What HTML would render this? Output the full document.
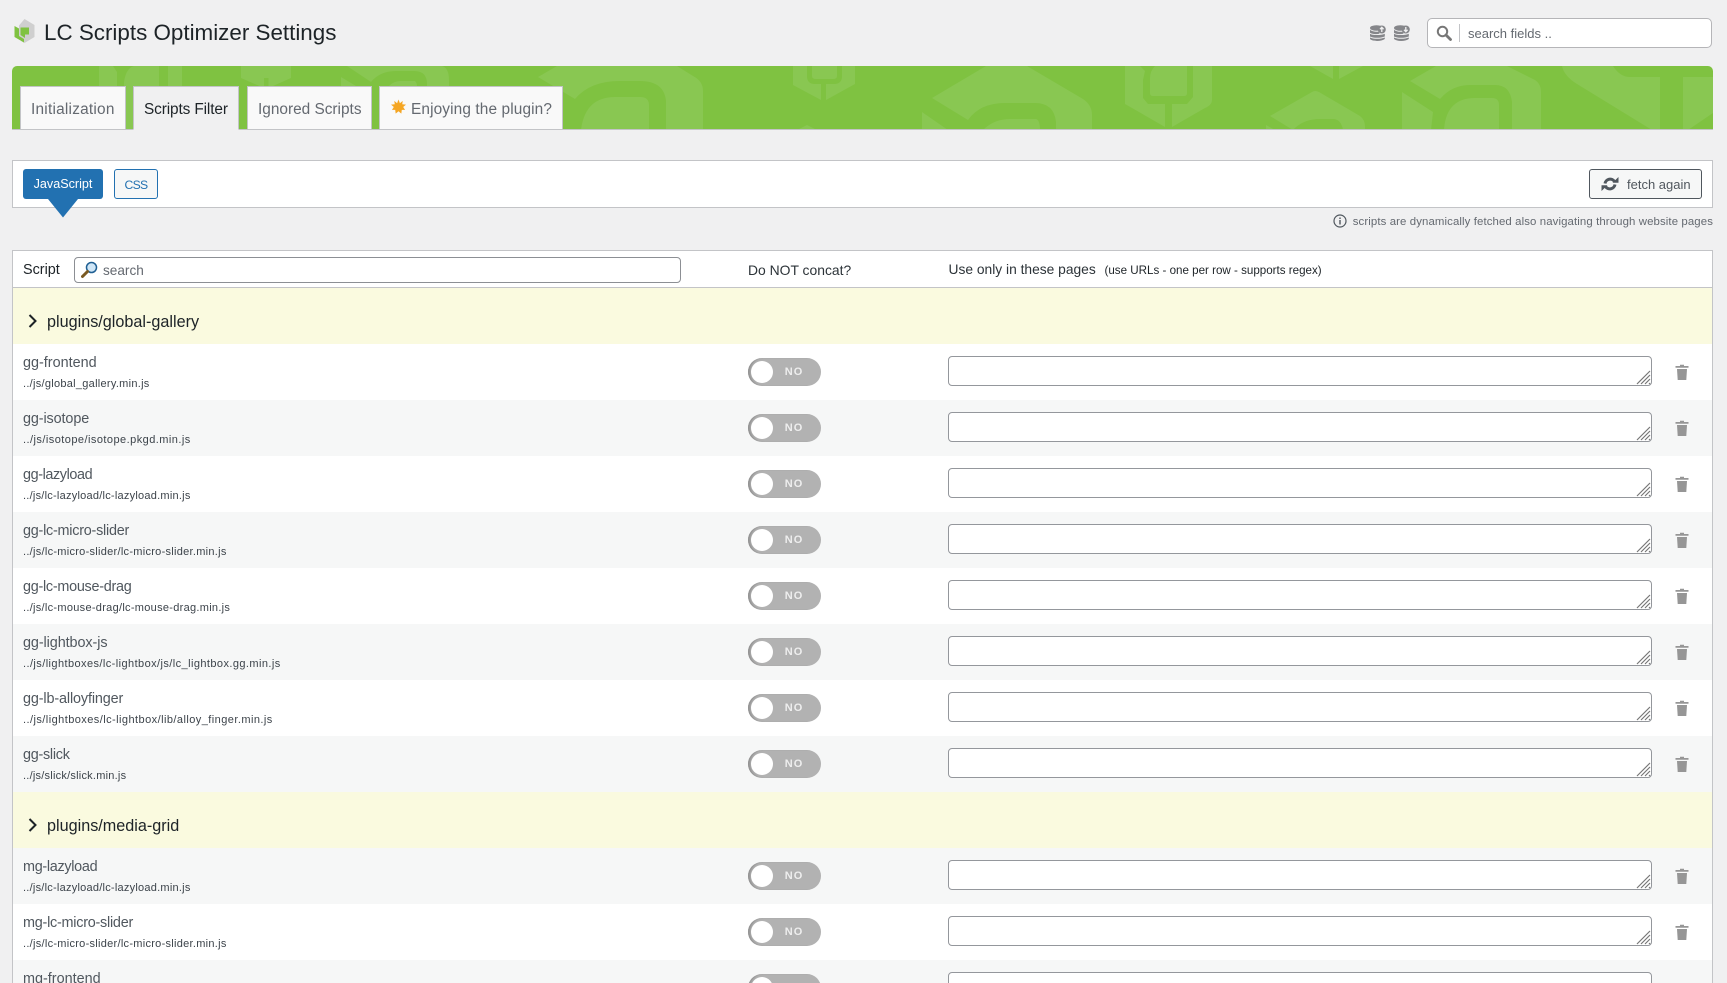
<!DOCTYPE html>
<html lang="en">
<head>
<meta charset="utf-8">
<title>LC Scripts Optimizer Settings</title>
<style>
html,body{margin:0;padding:0;width:1727px;height:983px;overflow:hidden;background:#f0f0f1;font-family:"Liberation Sans",Arial,sans-serif;color:#3c434a}
*{box-sizing:border-box}
#wrap{position:relative;width:1727px;height:983px;overflow:hidden}
.a{position:absolute}
#title{left:44px;top:18px;font-size:22.4px;line-height:30px;color:#1d2327;white-space:nowrap}
#search{left:1427px;top:18px;width:285px;height:30px;background:#fff;border:1px solid #b5b5b8;border-radius:5px}
#banner{left:12px;top:66px;width:1701px;height:64px;background:#7fc241;border-radius:5px 5px 0 0;border-bottom:1px solid #c3c4c7;overflow:hidden}
.tab{position:absolute;top:86px;height:44px;background:#f9f9f9;border:1px solid #c3c4c7;font-size:15.4px;line-height:45px;color:#646970;white-space:nowrap}
.tab.on{background:#f0f0f1;color:#1d2327;border-bottom-color:#f0f0f1}
#box{left:12px;top:160px;width:1701px;height:48px;background:#fff;border:1px solid #c3c4c7}
.btn{position:absolute;top:169px;height:30px;border-radius:3px;line-height:30px;white-space:nowrap;font-size:12.6px}
#tbl{left:12px;top:250px;width:1701px;height:740px;background:#fff;border:1px solid #c3c4c7;overflow:hidden}
.hd{position:absolute;top:270px;transform:translateY(-50%);white-space:nowrap;line-height:18px}
.row{position:absolute;left:13px;width:1699px;height:56px;background:#fff}
.row.g{background:#f6f7f7}
.grp{position:absolute;left:13px;width:1699px;height:56px;background:#fafadf}
.grp span{position:absolute;left:34px;top:25px;font-size:16.2px;line-height:19px;color:#1d2327;white-space:nowrap}
.grp svg{position:absolute;left:15px;top:26px}
.nm{position:absolute;left:10px;top:10px;font-size:14.4px;line-height:18px;color:#50575e;white-space:nowrap}
.pt{position:absolute;left:10px;top:33px;font-size:11px;line-height:14px;color:#3c434a;white-space:nowrap}
.tg{position:absolute;left:735px;top:14px;width:73px;height:28px;border-radius:14px;background:#b2b2b2;box-shadow:inset 3px 0 2px -1px #909090}
.tg i{position:absolute;left:3px;top:3px;width:22px;height:22px;border-radius:50%;background:#fff;display:block}
.tg b{position:absolute;left:34px;top:0;width:24px;text-align:center;font-weight:bold;font-size:11px;line-height:29px;color:#eee;letter-spacing:1px}
.ta{position:absolute;left:935px;top:12px;width:704px;height:30px;border:1px solid #94979c;border-radius:4px;background:#fff;resize:none;display:block;margin:0;padding:0;outline:0}
.gr{position:absolute;left:1623px;top:26px}
.tr{position:absolute;left:1662px;top:20px}
</style>
</head>
<body>
<div id="wrap">

<svg class="a" style="left:14px;top:19px" width="21" height="24" viewBox="0 0 21 24">
<path d="M10.5 0 20.5 6V18L10.5 24 7 22V19.500L5 18.500V6.500Z" fill="#cfcfcf"/>
<path d="M0.500 7 5 9.500V17L10 20V23.500L0.500 18Z" fill="#7fc241"/>
<path d="M6.500 8.500H15V15.500H11V19L6.500 16Z" fill="#7fc241"/>
</svg>
<div id="title" class="a">LC Scripts Optimizer Settings</div>

<svg class="a" style="left:1370px;top:25px" width="16" height="16" viewBox="0 0 16 16">
<g fill="#85868a"><ellipse cx="6.500" cy="3" rx="6.500" ry="2.800"/><path d="M0 4.800C2 7 8 7 9 6.500L9.500 8.800C6 9.500 2 9.200 0 7.800ZM0 8.700C2.500 10.500 11 10.500 14.800 8.700V11.500C11 13.200 3 13.200 0 11.500ZM0 12.500C3 14.200 11 14.200 14.800 12.500V14C11 16.600 3 16.600 0 14Z"/><circle cx="11.800" cy="4.500" r="4"/></g>
<path d="M11.800 7V2.500M10 4.200 11.800 2.300 13.600 4.200" fill="none" stroke="#f0f0f1" stroke-width="1.300"/>
</svg>
<svg class="a" style="left:1394px;top:25px" width="16" height="16" viewBox="0 0 16 16">
<g fill="#85868a"><ellipse cx="6.500" cy="3" rx="6.500" ry="2.800"/><path d="M0 4.800C2 7 8 7 9 6.500L9.500 8.800C6 9.500 2 9.200 0 7.800ZM0 8.700C2.500 10.500 11 10.500 14.800 8.700V11.500C11 13.200 3 13.200 0 11.500ZM0 12.500C3 14.200 11 14.200 14.800 12.500V14C11 16.600 3 16.600 0 14Z"/><circle cx="11.800" cy="4.500" r="4"/></g>
<path d="M11.800 2V6.500M10 4.800 11.800 6.700 13.600 4.800" fill="none" stroke="#f0f0f1" stroke-width="1.300"/>
</svg>

<div id="search" class="a"></div>
<svg class="a" style="left:1436px;top:25px" width="16" height="16" viewBox="0 0 16 16">
<circle cx="6.500" cy="6.500" r="4.700" fill="none" stroke="#777" stroke-width="2"/>
<path d="M10 10 14.500 14.500" stroke="#777" stroke-width="2.800" stroke-linecap="round"/>
</svg>
<div class="a" style="left:1459px;top:24px;width:1px;height:18px;background:#c3c4c7"></div>
<div class="a" style="left:1468px;top:25px;font-size:13px;line-height:18px;color:#646970;white-space:nowrap">search fields ..</div>

<div id="banner" class="a">
<svg class="a" style="left:-12px;top:-66px" width="1727" height="130" viewBox="0 0 1727 130">
<g fill="#89c752">
<path d="M99 66H113L117 72V130H99Z"/>
<path d="M124 130V82Q126 68 134 66H159V130Z"/>
<path d="M168 66H182V130H168Z"/>
<path d="M241 66V78L264 88V78H268.500V88L291 78V66Z"/>
<path d="M347 66H442Q449 68 449 80V90H427V84Q427 71 414 71H396Q380 71 371 82Z"/>
<path d="M341 77 366 92H341Z"/>
<path d="M389 86Q394 81 400 81H415Q417 83 417 86Z"/>
<path d="M538 77 557 66H677L693 76Q703 81 703 91V130H666V101Q664 81 640 81H620Q590 81 575 99Z"/>
<path d="M581 130Q585 97 615 97H640Q649 97 649 105V130Z"/>
<path d="M793 66V85L821 100V84H815Q807 84 807 76V66Z"/>
<path d="M826 100 855 84V66H842V76Q842 84 834 84H826Z"/>
<path d="M812 66H837V76Q837 79 833 79H816Q812 79 812 76Z"/>
<path d="M797 130 807 125 817 130Z"/>
<path d="M932 98 986 66H1027L1083 99Q1092 105 1092 115V130H1056V122Q1054 103 1035 103H1005Q980 103 968 120Z"/>
<path d="M922 112 948 130H922Z"/>
<path d="M983 130Q994 119 1010 119H1036Q1040 120 1040 130Z"/>
<path d="M1125 66H1140L1145 71 1143 80V98L1148 104H1165V127L1125 104Z"/>
<path d="M1172 127V104H1187L1193 97V66H1212V100Q1212 105 1205 108Z"/>
<path d="M1155 66H1187V93Q1187 96 1184 96H1153Q1150 96 1150 93V78Q1150 71 1155 66Z"/>
<path d="M1310 66 1333 79V66ZM1339 66V79L1363 66Z"/>
<path d="M1270 116 1312 92Q1315 90 1319 92L1360 116Q1365 120 1365 126V130H1343Q1341 119 1333 119H1320Q1303 119 1293 130Z"/>
<path d="M1266 125 1275 130H1266Z"/>
<path d="M1410 81 1436 66H1507L1535 80Q1541 84 1541 92V130H1512V102Q1510 85 1495 85H1470Q1452 85 1440 99Z"/>
<path d="M1444 130Q1446 98 1475 98H1492Q1499 98 1499 105V130Z"/>
<path d="M1402 92 1433 112 1431 130H1402Z"/>
<path d="M1562 66H1613Q1620 77 1630 77H1660V130H1652L1577 84Q1564 76 1562 66Z"/>
<path d="M1683 77H1713V113L1688 130H1683Z"/>
</g>
</svg>
</div>

<div class="tab" style="left:20px;width:106px;padding-left:10px;letter-spacing:.23px">Initialization</div>
<div class="tab on" style="left:133px;width:106px;padding-left:10px;letter-spacing:-.12px">Scripts Filter</div>
<div class="tab" style="left:247px;width:125px;padding-left:10px">Ignored Scripts</div>
<div class="tab" style="left:379px;width:184px;padding-left:31px;letter-spacing:.12px">Enjoying the plugin?</div>
<svg class="a" style="left:391px;top:99px" width="15" height="16" viewBox="0 0 16 16">
<path d="M8 0 9.500 4 12.500 1.500 12 5 16 5.500 13 8 15 11 11.500 11 11 15 8 12.500 5 15 4.500 11 1 11 3 8 0 5.500 4 5 3.500 1.500 6.500 4Z" fill="#f5a623"/>
</svg>

<div id="box" class="a"></div>
<div class="btn" style="left:23px;width:80px;background:#2271b1;color:#fff;text-align:center;line-height:31.500px">JavaScript</div>
<svg class="a" style="left:48px;top:199px" width="30" height="19" viewBox="0 0 30 19"><path d="M0 0H30L15 18.500Z" fill="#2271b1"/></svg>
<div class="btn" style="left:114px;width:44px;background:#f6f7f7;border:1px solid #2271b1;color:#2271b1;text-align:center;font-size:12.200px;letter-spacing:-.7px">CSS</div>
<div class="btn" style="left:1589px;width:113px;background:#f6f7f7;border:1px solid #50575e;color:#50575e;font-size:13px;padding-left:37px">fetch again</div>
<svg class="a" style="left:1601px;top:176px" width="18" height="16" viewBox="0 0 18 16">
<g fill="none" stroke="#50575e" stroke-width="3"><path d="M4 7.500A5.200 5.200 0 0 1 13.500 5.500"/><path d="M14 8.500A5.200 5.200 0 0 1 4.500 10.500"/></g>
<path d="M11.500 6.800H17.500V1ZM.5 9.200H6.500L.5 15Z" fill="#50575e"/>
</svg>

<svg class="a" style="left:1333px;top:214px" width="14" height="14" viewBox="0 0 14 14">
<circle cx="7" cy="7" r="6" fill="none" stroke="#50575e" stroke-width="1.200"/>
<path d="M7 6V10.500M7 3.500V5" stroke="#50575e" stroke-width="1.400"/>
</svg>
<div class="a" style="right:14px;top:215px;font-size:11.400px;line-height:14px;color:#646970;white-space:nowrap;letter-spacing:.11px">scripts are dynamically fetched also navigating through website pages</div>

<div id="tbl" class="a"></div>
<div class="a" style="left:13px;top:287px;width:1699px;height:1px;background:#c3c4c7"></div>
<div class="hd" style="left:23px;font-size:14.400px;color:#1d2327">Script</div>
<div class="a" style="left:74px;top:257px;width:607px;height:26px;background:#fff;border:1px solid #8c8f94;border-radius:4px"></div>
<svg class="a" style="left:81px;top:261px" width="18" height="18" viewBox="0 0 18 18">
<circle cx="10.500" cy="6.500" r="5" fill="#cfe6f7" stroke="#1f5f93" stroke-width="1.500"/>
<path d="M6.500 10.500 1.500 15.500" stroke="#7a5a22" stroke-width="3" stroke-linecap="round"/>
</svg>
<div class="a" style="left:103px;top:262px;font-size:13.600px;line-height:18px;color:#646970;white-space:nowrap">search</div>
<div class="hd" style="left:748px;font-size:13.900px;color:#2c3338">Do NOT concat?</div>
<div class="hd" style="left:948.500px;font-size:13.800px;color:#2c3338">Use only in these pages</div>
<div class="hd" style="left:1104.500px;top:271px;font-size:11.600px;color:#1d2327">(use URLs - one per row - supports regex)</div>

<div class="grp" style="top:288px"><svg width="12" height="14" viewBox="0 0 12 14"><path d="M1.500 1 7.500 7 1.500 13" fill="none" stroke="#1d2327" stroke-width="2"/></svg><span>plugins/global-gallery</span></div>

<div class="row" style="top:344px"><div class="nm">gg-frontend</div><div class="pt" style="letter-spacing:.28px">../js/global_gallery.min.js</div><div class="tg"><i></i><b>NO</b></div><textarea class="ta"></textarea><svg class="gr" width="15" height="15" viewBox="0 0 15 15"><path d="M1 14 14 1M5 14 14 5M9 14 14 9M13 14 14 13" stroke="#777" stroke-width="1.200" fill="none"/></svg><svg class="tr" width="14" height="16" viewBox="0 0 14 16"><path d="M5 2V.8H9V2H13.500V3.800H.5V2ZM2 5H12L11.300 16H2.700Z" fill="#969696"/></svg></div>
<div class="row g" style="top:400px"><div class="nm" style="letter-spacing:-.11px">gg-isotope</div><div class="pt" style="letter-spacing:.45px">../js/isotope/isotope.pkgd.min.js</div><div class="tg"><i></i><b>NO</b></div><textarea class="ta"></textarea><svg class="gr" width="15" height="15" viewBox="0 0 15 15"><path d="M1 14 14 1M5 14 14 5M9 14 14 9M13 14 14 13" stroke="#777" stroke-width="1.200" fill="none"/></svg><svg class="tr" width="14" height="16" viewBox="0 0 14 16"><path d="M5 2V.8H9V2H13.500V3.800H.5V2ZM2 5H12L11.300 16H2.700Z" fill="#969696"/></svg></div>
<div class="row" style="top:456px"><div class="nm" style="letter-spacing:-.4px">gg-lazyload</div><div class="pt" style="letter-spacing:.24px">../js/lc-lazyload/lc-lazyload.min.js</div><div class="tg"><i></i><b>NO</b></div><textarea class="ta"></textarea><svg class="gr" width="15" height="15" viewBox="0 0 15 15"><path d="M1 14 14 1M5 14 14 5M9 14 14 9M13 14 14 13" stroke="#777" stroke-width="1.200" fill="none"/></svg><svg class="tr" width="14" height="16" viewBox="0 0 14 16"><path d="M5 2V.8H9V2H13.500V3.800H.5V2ZM2 5H12L11.300 16H2.700Z" fill="#969696"/></svg></div>
<div class="row g" style="top:512px"><div class="nm" style="letter-spacing:-.24px">gg-lc-micro-slider</div><div class="pt" style="letter-spacing:.28px">../js/lc-micro-slider/lc-micro-slider.min.js</div><div class="tg"><i></i><b>NO</b></div><textarea class="ta"></textarea><svg class="gr" width="15" height="15" viewBox="0 0 15 15"><path d="M1 14 14 1M5 14 14 5M9 14 14 9M13 14 14 13" stroke="#777" stroke-width="1.200" fill="none"/></svg><svg class="tr" width="14" height="16" viewBox="0 0 14 16"><path d="M5 2V.8H9V2H13.500V3.800H.5V2ZM2 5H12L11.300 16H2.700Z" fill="#969696"/></svg></div>
<div class="row" style="top:568px"><div class="nm" style="letter-spacing:-.27px">gg-lc-mouse-drag</div><div class="pt" style="letter-spacing:.29px">../js/lc-mouse-drag/lc-mouse-drag.min.js</div><div class="tg"><i></i><b>NO</b></div><textarea class="ta"></textarea><svg class="gr" width="15" height="15" viewBox="0 0 15 15"><path d="M1 14 14 1M5 14 14 5M9 14 14 9M13 14 14 13" stroke="#777" stroke-width="1.200" fill="none"/></svg><svg class="tr" width="14" height="16" viewBox="0 0 14 16"><path d="M5 2V.8H9V2H13.500V3.800H.5V2ZM2 5H12L11.300 16H2.700Z" fill="#969696"/></svg></div>
<div class="row g" style="top:624px"><div class="nm" style="letter-spacing:-.08px">gg-lightbox-js</div><div class="pt" style="letter-spacing:.42px">../js/lightboxes/lc-lightbox/js/lc_lightbox.gg.min.js</div><div class="tg"><i></i><b>NO</b></div><textarea class="ta"></textarea><svg class="gr" width="15" height="15" viewBox="0 0 15 15"><path d="M1 14 14 1M5 14 14 5M9 14 14 9M13 14 14 13" stroke="#777" stroke-width="1.200" fill="none"/></svg><svg class="tr" width="14" height="16" viewBox="0 0 14 16"><path d="M5 2V.8H9V2H13.500V3.800H.5V2ZM2 5H12L11.300 16H2.700Z" fill="#969696"/></svg></div>
<div class="row" style="top:680px"><div class="nm" style="letter-spacing:-.13px">gg-lb-alloyfinger</div><div class="pt" style="letter-spacing:.44px">../js/lightboxes/lc-lightbox/lib/alloy_finger.min.js</div><div class="tg"><i></i><b>NO</b></div><textarea class="ta"></textarea><svg class="gr" width="15" height="15" viewBox="0 0 15 15"><path d="M1 14 14 1M5 14 14 5M9 14 14 9M13 14 14 13" stroke="#777" stroke-width="1.200" fill="none"/></svg><svg class="tr" width="14" height="16" viewBox="0 0 14 16"><path d="M5 2V.8H9V2H13.500V3.800H.5V2ZM2 5H12L11.300 16H2.700Z" fill="#969696"/></svg></div>
<div class="row g" style="top:736px"><div class="nm" style="letter-spacing:-.27px">gg-slick</div><div class="pt" style="letter-spacing:.23px">../js/slick/slick.min.js</div><div class="tg"><i></i><b>NO</b></div><textarea class="ta"></textarea><svg class="gr" width="15" height="15" viewBox="0 0 15 15"><path d="M1 14 14 1M5 14 14 5M9 14 14 9M13 14 14 13" stroke="#777" stroke-width="1.200" fill="none"/></svg><svg class="tr" width="14" height="16" viewBox="0 0 14 16"><path d="M5 2V.8H9V2H13.500V3.800H.5V2ZM2 5H12L11.300 16H2.700Z" fill="#969696"/></svg></div>

<div class="grp" style="top:792px"><svg width="12" height="14" viewBox="0 0 12 14"><path d="M1.500 1 7.500 7 1.500 13" fill="none" stroke="#1d2327" stroke-width="2"/></svg><span>plugins/media-grid</span></div>

<div class="row g" style="top:848px"><div class="nm" style="letter-spacing:-.3px">mg-lazyload</div><div class="pt" style="letter-spacing:.24px">../js/lc-lazyload/lc-lazyload.min.js</div><div class="tg"><i></i><b>NO</b></div><textarea class="ta"></textarea><svg class="gr" width="15" height="15" viewBox="0 0 15 15"><path d="M1 14 14 1M5 14 14 5M9 14 14 9M13 14 14 13" stroke="#777" stroke-width="1.200" fill="none"/></svg><svg class="tr" width="14" height="16" viewBox="0 0 14 16"><path d="M5 2V.8H9V2H13.500V3.800H.5V2ZM2 5H12L11.300 16H2.700Z" fill="#969696"/></svg></div>
<div class="row" style="top:904px"><div class="nm" style="letter-spacing:-.24px">mg-lc-micro-slider</div><div class="pt" style="letter-spacing:.28px">../js/lc-micro-slider/lc-micro-slider.min.js</div><div class="tg"><i></i><b>NO</b></div><textarea class="ta"></textarea><svg class="gr" width="15" height="15" viewBox="0 0 15 15"><path d="M1 14 14 1M5 14 14 5M9 14 14 9M13 14 14 13" stroke="#777" stroke-width="1.200" fill="none"/></svg><svg class="tr" width="14" height="16" viewBox="0 0 14 16"><path d="M5 2V.8H9V2H13.500V3.800H.5V2ZM2 5H12L11.300 16H2.700Z" fill="#969696"/></svg></div>
<div class="row g" style="top:960px"><div class="nm">mg-frontend</div><div class="tg"><i></i><b>NO</b></div><textarea class="ta"></textarea></div>

</div>
</body>
</html>
